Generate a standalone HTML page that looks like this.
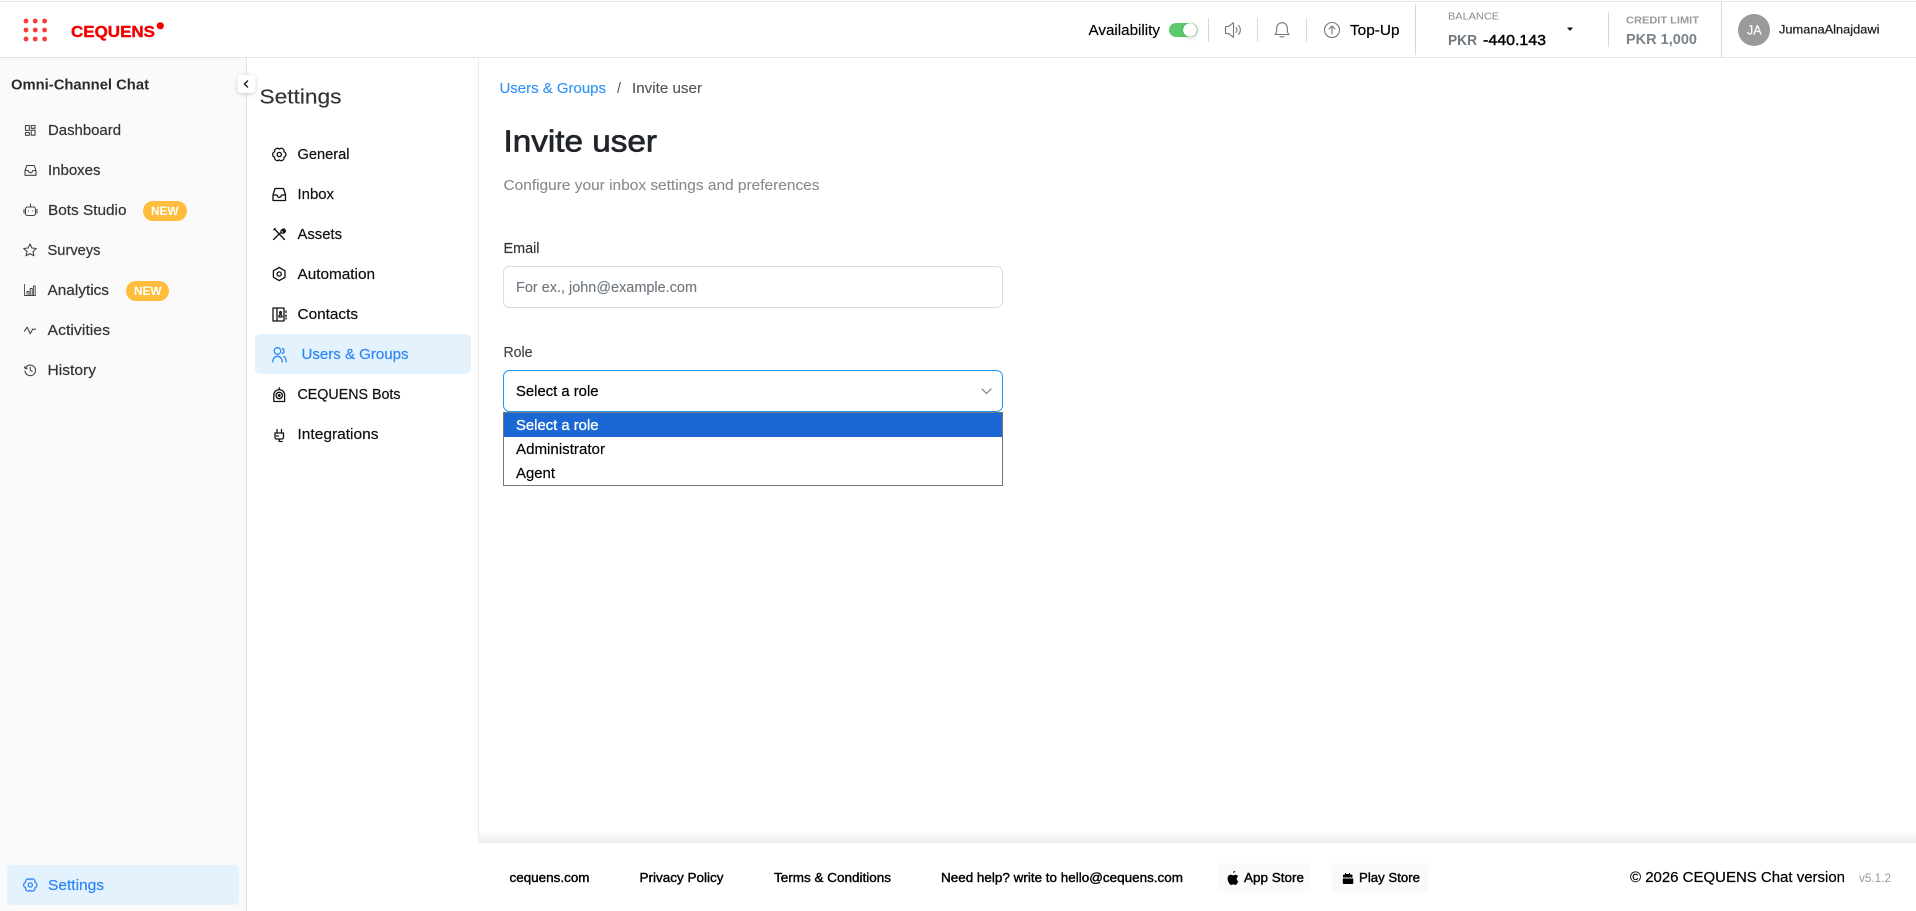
<!DOCTYPE html>
<html lang="en">
<head>
<meta charset="utf-8">
<title>Invite user</title>
<style>
html,body{margin:0;padding:0;width:1916px;height:911px;overflow:hidden;background:#fff}
svg{display:block}
text{font-family:"Liberation Sans",sans-serif;font-size:14.4px;white-space:pre}
.nav{fill:#333;stroke:#333;stroke-width:.2}
.nv2{fill:#111;stroke:#111;stroke-width:.2}
.blue{fill:#2f86f6;stroke:#2f86f6;stroke-width:.2}
.foot{font-size:12.6px;fill:#000;stroke:#000;stroke-width:.38}
.ic{fill:none;stroke:#444;stroke-width:1.1;stroke-linecap:round;stroke-linejoin:round}
.ik{fill:none;stroke:#111;stroke-width:1.3;stroke-linecap:round;stroke-linejoin:round}
.ib{fill:none;stroke:#2f86f6;stroke-width:1.3;stroke-linecap:round;stroke-linejoin:round}
.ih{fill:none;stroke:#777;stroke-width:1.1;stroke-linecap:round;stroke-linejoin:round}
.sep{stroke:#d8d8d8;stroke-width:1}
</style>
</head>
<body>
<svg width="1916" height="911" viewBox="0 0 1916 911" xmlns="http://www.w3.org/2000/svg">
<defs>
<linearGradient id="fs" x1="0" y1="0" x2="0" y2="1"><stop offset="0" stop-color="#fff"/><stop offset="1" stop-color="#ececec"/></linearGradient>
<filter id="sh" x="-50%" y="-50%" width="200%" height="200%"><feDropShadow dx="0" dy="1" stdDeviation="2" flood-color="#000" flood-opacity=".2"/></filter>
</defs>

<!-- frame -->
<rect x="0" y="1" width="1916" height="1" fill="#e6e6e6"/>
<rect x="0" y="57" width="1916" height="1" fill="#e2e2e2"/>
<rect x="0" y="58" width="246" height="853" fill="#fafafa"/>
<rect x="246" y="58" width="1" height="853" fill="#e4e4e4"/>
<rect x="478" y="58" width="1" height="785" fill="#ebebeb"/>

<!-- logo -->
<g fill="#f93b3b">
<circle cx="26" cy="21" r="2.4"/><circle cx="35.2" cy="21" r="2.4"/><circle cx="44.6" cy="21" r="2.4"/>
<circle cx="26" cy="30" r="2.4"/><circle cx="35.2" cy="30" r="2.4"/><circle cx="44.6" cy="30" r="2.4"/>
<circle cx="26" cy="39" r="2.4"/><circle cx="35.2" cy="39" r="2.4"/><circle cx="44.6" cy="39" r="2.4"/>
</g>
<text x="71" y="37" textLength="84" lengthAdjust="spacingAndGlyphs" style="font-size:16px;font-weight:700;fill:#f40000;stroke:#f40000;stroke-width:.4">CEQUENS</text>
<circle cx="160.3" cy="25.8" r="3.6" fill="#f40000"/>

<!-- header right -->
<text x="1088.5" y="35" textLength="71.5" lengthAdjust="spacingAndGlyphs" style="fill:#000;stroke:#000;stroke-width:.15">Availability</text>
<rect x="1169" y="23" width="28.5" height="14" rx="7" fill="#5dcb70"/>
<circle cx="1190" cy="30" r="6.8" fill="#fff" filter="url(#sh)"/>
<line class="sep" x1="1208.5" y1="18" x2="1208.5" y2="42"/>
<path class="ih" d="M1225.5 26.5h3l5-3.800v14.600l-5-3.800h-3z"/>
<path class="ih" d="M1236 27.5a3.600 3.600 0 0 1 0 5M1238.500 25.500a6.500 6.500 0 0 1 0 9"/>
<line class="sep" x1="1257.5" y1="18" x2="1257.5" y2="42"/>
<path class="ih" d="M1275 34.500c1.200-1.200 1.700-2.400 1.700-4.500v-2a5.300 5.300 0 0 1 10.600 0v2c0 2.100.5 3.300 1.700 4.500zM1280 36.800h4"/>
<line class="sep" x1="1306.5" y1="18" x2="1306.5" y2="42"/>
<circle class="ih" cx="1332" cy="30" r="7.500"/>
<path class="ih" d="M1332 34v-7.600M1329 29l3-3 3 3"/>
<text x="1350" y="35" textLength="49.500" lengthAdjust="spacingAndGlyphs" style="fill:#000;stroke:#000;stroke-width:.2">Top-Up</text>
<line x1="1415.5" y1="4" x2="1415.5" y2="55" stroke="#d8d8d8"/>
<text x="1448" y="19.500" textLength="51" lengthAdjust="spacingAndGlyphs" style="font-size:10px;fill:#8a8a8a">BALANCE</text>
<text x="1448" y="45" textLength="29" lengthAdjust="spacingAndGlyphs" style="font-weight:700;fill:#6f7780">PKR</text>
<text x="1483" y="45" textLength="63" lengthAdjust="spacingAndGlyphs" style="fill:#000;stroke:#000;stroke-width:.4">-440.143</text>
<path d="M1567 27.500h6l-3 3.500z" fill="#111"/>
<line x1="1608.5" y1="12" x2="1608.5" y2="47" stroke="#d8d8d8"/>
<text x="1626" y="23.500" textLength="73" lengthAdjust="spacingAndGlyphs" style="font-size:10px;font-weight:700;fill:#9a9a9a">CREDIT LIMIT</text>
<text x="1626" y="44" textLength="71" lengthAdjust="spacingAndGlyphs" style="font-weight:700;fill:#7a828a">PKR 1,000</text>
<line x1="1721.5" y1="2" x2="1721.5" y2="57" stroke="#d8d8d8"/>
<circle cx="1754" cy="30" r="16" fill="#9a9a9a"/>
<text x="1747" y="34.500" textLength="14.500" lengthAdjust="spacingAndGlyphs" style="font-size:12.500px;fill:#fff;stroke:#fff;stroke-width:.2">JA</text>
<text x="1779" y="33.500" textLength="100.500" lengthAdjust="spacingAndGlyphs" style="font-size:12.400px;fill:#222;stroke:#222;stroke-width:.25">JumanaAlnajdawi</text>

<!-- left sidebar -->
<text x="11" y="89.500" textLength="138" lengthAdjust="spacingAndGlyphs" style="font-weight:700;fill:#2a2a2a">Omni-Channel Chat</text>
<rect x="237.5" y="75" width="18" height="18" rx="4" fill="#fff" filter="url(#sh)"/>
<path d="M247.5 81l-3 3 3 3" fill="none" stroke="#222" stroke-width="1.500" stroke-linecap="round" stroke-linejoin="round"/>

<g class="ic">
<rect x="25.500" y="125.500" width="3.800" height="5"/><rect x="31.200" y="125.500" width="3.800" height="2.800"/><rect x="25.500" y="132.500" width="3.800" height="2.800"/><rect x="31.200" y="130.200" width="3.800" height="5"/>
<path d="M25 170.500l1.800-5h7.400l1.800 5v4.800h-11zM25 170.500h3.200c.4 1.500 1.200 2.200 2.300 2.200s1.900-.7 2.300-2.200h3.200"/>
<rect x="25.500" y="207" width="10" height="8.500" rx="2"/><path d="M30.500 207v-2.800M24 209.500v3.500M37 209.500v3.500"/>
<path d="M28.400 211h.1M32.600 211h.1"/>
<path d="M30 244l1.900 4 4.400.5-3.300 3 .9 4.300-3.900-2.200-3.900 2.200.9-4.300-3.300-3 4.400-.5z"/>
<path d="M24.500 284.500v11h11M27 295.500v-4h2v4M30.200 295.500v-7h2v7M33.400 295.500v-9.500h1.800v9.500" stroke-width=".9"/>
<path d="M24.500 331l2.700-3.800 3 6.500 2.500-4.500h2.800"/>
<path d="M25.300 368.500a5.300 5.300 0 1 1-.3 2.500M24.500 366.800l.8 1.900 1.900-.4M30.300 367.300v3l2 1.200"/>
</g>
<text class="nav" x="48" y="135" textLength="73" lengthAdjust="spacingAndGlyphs">Dashboard</text>
<text class="nav" x="48" y="175" textLength="52.500" lengthAdjust="spacingAndGlyphs">Inboxes</text>
<text class="nav" x="48" y="215" textLength="78.500" lengthAdjust="spacingAndGlyphs">Bots Studio</text>
<rect x="143" y="201" width="44" height="20" rx="10" fill="#ffbd3b"/>
<text x="151" y="215" textLength="27.500" lengthAdjust="spacingAndGlyphs" style="font-size:12px;font-weight:700;fill:#fff">NEW</text>
<text class="nav" x="47.500" y="255" textLength="53" lengthAdjust="spacingAndGlyphs">Surveys</text>
<text class="nav" x="47.500" y="295" textLength="61.500" lengthAdjust="spacingAndGlyphs">Analytics</text>
<rect x="126" y="281" width="43" height="20" rx="10" fill="#ffbd3b"/>
<text x="134" y="295" textLength="27.500" lengthAdjust="spacingAndGlyphs" style="font-size:12px;font-weight:700;fill:#fff">NEW</text>
<text class="nav" x="47.500" y="335" textLength="62.500" lengthAdjust="spacingAndGlyphs">Activities</text>
<text class="nav" x="47.500" y="375" textLength="48.500" lengthAdjust="spacingAndGlyphs">History</text>

<rect x="7" y="865" width="232" height="40" rx="5" fill="#e3f2fd"/>
<path class="ib" style="stroke-width:1.05" transform="translate(30.300 885) scale(1.22)" d="M3.810 2.200A2.300 2.300 0 0 1 0 4.400A2.300 2.300 0 0 1-3.810 2.200A2.300 2.300 0 0 1-3.810-2.200A2.300 2.300 0 0 1 0-4.400A2.300 2.300 0 0 1 3.810-2.200A2.300 2.300 0 0 1 3.810 2.200z"/>
<circle class="ib" style="stroke-width:1.3" cx="30.300" cy="885" r="2.100"/>
<text class="blue" x="48" y="890" textLength="56" lengthAdjust="spacingAndGlyphs">Settings</text>

<!-- settings panel -->
<text x="259.500" y="103.500" textLength="82" lengthAdjust="spacingAndGlyphs" style="font-size:20.400px;fill:#333;stroke:#333;stroke-width:.15">Settings</text>
<rect x="255" y="334" width="216" height="40" rx="5" fill="#e3f2fd"/>
<g class="ik">
<path style="stroke-width:1.05" transform="translate(279.300 154.500) scale(1.22)" d="M3.810 2.200A2.300 2.300 0 0 1 0 4.400A2.300 2.300 0 0 1-3.810 2.200A2.300 2.300 0 0 1-3.810-2.200A2.300 2.300 0 0 1 0-4.400A2.300 2.300 0 0 1 3.810-2.200A2.300 2.300 0 0 1 3.810 2.200z"/>
<circle cx="279.300" cy="154.500" r="2.100"/>
<path d="M273 195l2-6.500h8.500l2 6.500v5.500H273zM273 195h4c.4 1.700 1.200 2.400 2.200 2.400s1.900-.7 2.300-2.400h4"/>
<path d="M274.500 229l10 10.500M273.500 239.500l7.500-7.200M281 232.300c-.5-1.500.5-3.500 3.500-3.300l-1.800 1.800.8 1 1.900-1.600c.2 2.300-2 3.300-3.600 3M273.800 229.800l1.300-1.300"/>
<path d="M279.200 267.500l5.800 3.300v6.500l-5.800 3.300-5.800-3.300v-6.500z"/><circle cx="279.200" cy="274" r="2.100"/>
<path d="M273 308h11v13h-11zM277 308v13M286 311v1.500M286 315v1.500M286 318v1"/>
<circle cx="280.500" cy="312.500" r=".9"/><path d="M279 317h3v-.8a1.500 1.500 0 0 0-3 0z"/>
</g>
<g class="ib">
<circle cx="277.500" cy="351" r="3.300"/><path d="M272.800 362c0-3.600 2-5.700 4.700-5.700s4.700 2.100 4.700 5.700"/>
<path d="M282.500 348.500a2.800 2.800 0 0 1 0 5M283.800 356.500c1.500.8 2.400 2.800 2.400 5.500"/>
</g>
<g class="ik">
<path d="M273.800 401.500v-6.500a5.400 5.400 0 0 1 10.800 0v6.500zM279.200 389.300v-1.500"/><circle cx="279.200" cy="395.500" r="3.200"/><circle cx="279.200" cy="395.500" r=".8"/>
<path d="M275 433h8.500v4.500a1.500 1.500 0 0 1-1.500 1.500h-5.500a1.500 1.500 0 0 1-1.500-1.500zM277 433v-3.500M281.500 433v-3.500M279.200 439v2.500h3M276.500 436h2"/>
</g>
<text class="nv2" x="297.500" y="159" textLength="52" lengthAdjust="spacingAndGlyphs">General</text>
<text class="nv2" x="297.500" y="199" textLength="36.500" lengthAdjust="spacingAndGlyphs">Inbox</text>
<text class="nv2" x="297.500" y="239" textLength="44.500" lengthAdjust="spacingAndGlyphs">Assets</text>
<text class="nv2" x="297.500" y="279" textLength="77.500" lengthAdjust="spacingAndGlyphs">Automation</text>
<text class="nv2" x="297.500" y="319" textLength="60.500" lengthAdjust="spacingAndGlyphs">Contacts</text>
<text class="blue" x="301.500" y="359" textLength="107" lengthAdjust="spacingAndGlyphs">Users &amp; Groups</text>
<text class="nv2" x="297.500" y="399" textLength="103" lengthAdjust="spacingAndGlyphs">CEQUENS Bots</text>
<text class="nv2" x="297.500" y="439" textLength="81" lengthAdjust="spacingAndGlyphs">Integrations</text>

<!-- main -->
<text x="499.500" y="93" textLength="106.500" lengthAdjust="spacingAndGlyphs" style="fill:#2f90f5;stroke:#2f90f5;stroke-width:.12">Users &amp; Groups</text>
<text x="617" y="93" style="fill:#555">/</text>
<text x="632" y="93" textLength="70" lengthAdjust="spacingAndGlyphs" style="fill:#555;stroke:#555;stroke-width:.12">Invite user</text>
<text x="503.500" y="151.500" textLength="153.500" lengthAdjust="spacingAndGlyphs" style="font-size:30.500px;fill:#212529;stroke:#212529;stroke-width:.7">Invite user</text>
<text x="503.500" y="190" textLength="316" lengthAdjust="spacingAndGlyphs" style="fill:#8a8a8a;stroke:#8a8a8a;stroke-width:.1">Configure your inbox settings and preferences</text>

<text x="503.500" y="253" textLength="36" lengthAdjust="spacingAndGlyphs" style="fill:#333;stroke:#333;stroke-width:.15">Email</text>
<rect x="503.500" y="266.500" width="499" height="41" rx="6" fill="#fff" stroke="#dcdcdc"/>
<text x="516" y="292" textLength="181" lengthAdjust="spacingAndGlyphs" style="fill:#6c757d;stroke:#6c757d;stroke-width:.1">For ex., john@example.com</text>

<text x="503.500" y="357" textLength="29" lengthAdjust="spacingAndGlyphs" style="fill:#444;stroke:#444;stroke-width:.15">Role</text>
<rect x="503.500" y="370.500" width="499" height="41" rx="6" fill="#fff" stroke="#2196f3"/>
<text x="516" y="396" textLength="82.500" lengthAdjust="spacingAndGlyphs" style="fill:#000;stroke:#000;stroke-width:.2">Select a role</text>
<path d="M982 389l4.500 4.500 4.500-4.500" fill="none" stroke="#777" stroke-width="1.100" stroke-linecap="round" stroke-linejoin="round"/>

<rect x="503.500" y="412.500" width="499" height="73" fill="#fff" stroke="#767676"/>
<rect x="504" y="413" width="498" height="24" fill="#1b67d3"/>
<text x="516" y="430" textLength="82.500" lengthAdjust="spacingAndGlyphs" style="fill:#fff;stroke:#fff;stroke-width:.3">Select a role</text>
<text x="516" y="454" textLength="89" lengthAdjust="spacingAndGlyphs" style="fill:#000;stroke:#000;stroke-width:.15">Administrator</text>
<text x="516" y="478" textLength="39" lengthAdjust="spacingAndGlyphs" style="fill:#000;stroke:#000;stroke-width:.15">Agent</text>

<!-- footer -->
<rect x="479" y="832" width="1437" height="11" fill="url(#fs)"/>
<text class="foot" x="509.500" y="882" textLength="80" lengthAdjust="spacingAndGlyphs">cequens.com</text>
<text class="foot" x="639.500" y="882" textLength="84" lengthAdjust="spacingAndGlyphs">Privacy Policy</text>
<text class="foot" x="774" y="882" textLength="117" lengthAdjust="spacingAndGlyphs">Terms &amp; Conditions</text>
<text class="foot" x="941" y="882" textLength="242" lengthAdjust="spacingAndGlyphs">Need help? write to hello@cequens.com</text>
<rect x="1217" y="863" width="94" height="29" rx="4" fill="#fafafa"/>
<path d="M1235.300 870.800c-1.200.1-2.100.9-2.200 2.100 1 .1 2-.8 2.200-2.100zM1238.200 876.200c-.7-1-1.700-1.500-2.600-1.500-1.100 0-1.700.6-2.500.6s-1.500-.6-2.400-.6c-1.400 0-3.100 1.100-3.100 3.800 0 3 2.200 6.500 3.700 6.500.8 0 1.100-.6 2-.6s1.200.6 2 .6c1.100 0 2.200-1.900 3-3.800-2-.9-2.100-3.800-.1-5z" fill="#000"/>
<text class="foot" x="1244" y="882" textLength="60" lengthAdjust="spacingAndGlyphs">App Store</text>
<rect x="1332" y="863" width="96" height="29" rx="4" fill="#fafafa"/>
<path d="M1345 874.500v-1.500h1v1h3v-1h1v1.500h1.500a1 1 0 0 1 1 1v2h-9.500v-2a1 1 0 0 1 1-1zM1342.800 878.500h10.500v4.500a1 1 0 0 1-1 1h-8.500a1 1 0 0 1-1-1z" fill="#000"/>
<text class="foot" x="1359" y="882" textLength="61" lengthAdjust="spacingAndGlyphs">Play Store</text>
<text x="1630" y="882" textLength="215" lengthAdjust="spacingAndGlyphs" style="fill:#000;stroke:#000;stroke-width:.2">© 2026 CEQUENS Chat version</text>
<text x="1859" y="882" textLength="32" lengthAdjust="spacingAndGlyphs" style="font-size:12px;fill:#999">v5.1.2</text>
</svg>
</body>
</html>
